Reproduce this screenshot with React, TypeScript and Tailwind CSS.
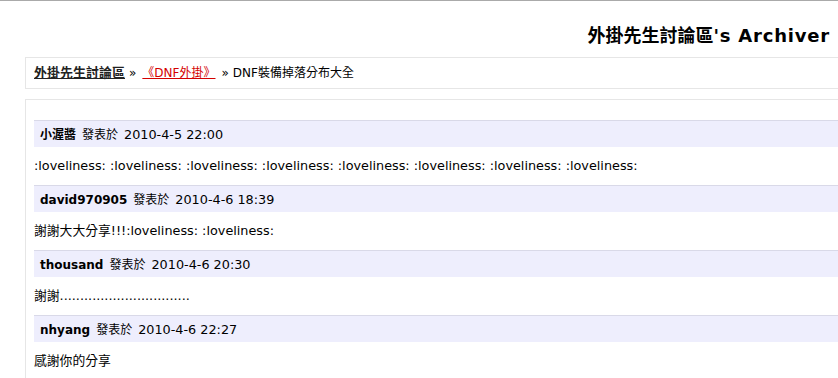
const posts = [
  { author: "小渥醬", date: "2010-4-5 22:00", body: ":loveliness: :loveliness: :loveliness: :loveliness: :loveliness: :loveliness: :loveliness: :loveliness:" },
  { author: "david970905", date: "2010-4-6 18:39", body: "謝謝大大分享!!!:loveliness: :loveliness:" },
  { author: "thousand", date: "2010-4-6 20:30", body: "謝謝................................" },
  { author: "nhyang", date: "2010-4-6 22:27", body: "感謝你的分享" },
];

export default function App() {
  return (
    <div className="min-h-screen overflow-hidden bg-white font-['DejaVu_Sans','Noto_Sans_CJK_TC',sans-serif] text-black">
      <div className="border-t border-[#aaaaaa]" />

      {/* 標題 */}
      <div className="flex h-[56px] justify-end pr-[8px] pt-[21px]">
        <h1 className="text-[18px] font-bold leading-[28px]">
          外掛先生討論區<span className="tracking-[0.8px]">'s Archiver</span>
        </h1>
      </div>

      <div className="pl-[25px]">
        {/* 導航 */}
        <div className="flex h-[32px] items-center border border-r-0 border-[#e6e6e6] pl-[8px] text-[12px]">
          <a href="#" className="text-[13px] font-bold text-[#222] underline">
            外掛先生討論區
          </a>
          <span className="px-[4px]">»</span>
          <a href="#" className="px-[2px] text-[#d40000] underline">
            《DNF外掛》
          </a>
          <span className="px-[4px]">»</span>
          <span>DNF裝備掉落分布大全</span>
        </div>

        {/* 帖子列表 */}
        <div className="mt-[10px] border-l border-t border-[#e6e6e6] pl-[8px] pt-[20px]">
          {posts.map((p) => (
            <div key={p.author}>
              <div className="flex h-[27px] items-center border-t border-[#d9d9e8] bg-[#eeeefd] pl-[6px] pt-[1px] text-[12.8px]">
                <span className="text-[12px] font-bold">{p.author}</span>
                <span className="ml-[6px] text-[12px]">發表於</span>
                <span className="ml-[6px]">{p.date}</span>
              </div>
              <div className="flex h-[38px] items-center text-[12.8px]">{p.body}</div>
            </div>
          ))}
        </div>
      </div>
    </div>
  );
}
